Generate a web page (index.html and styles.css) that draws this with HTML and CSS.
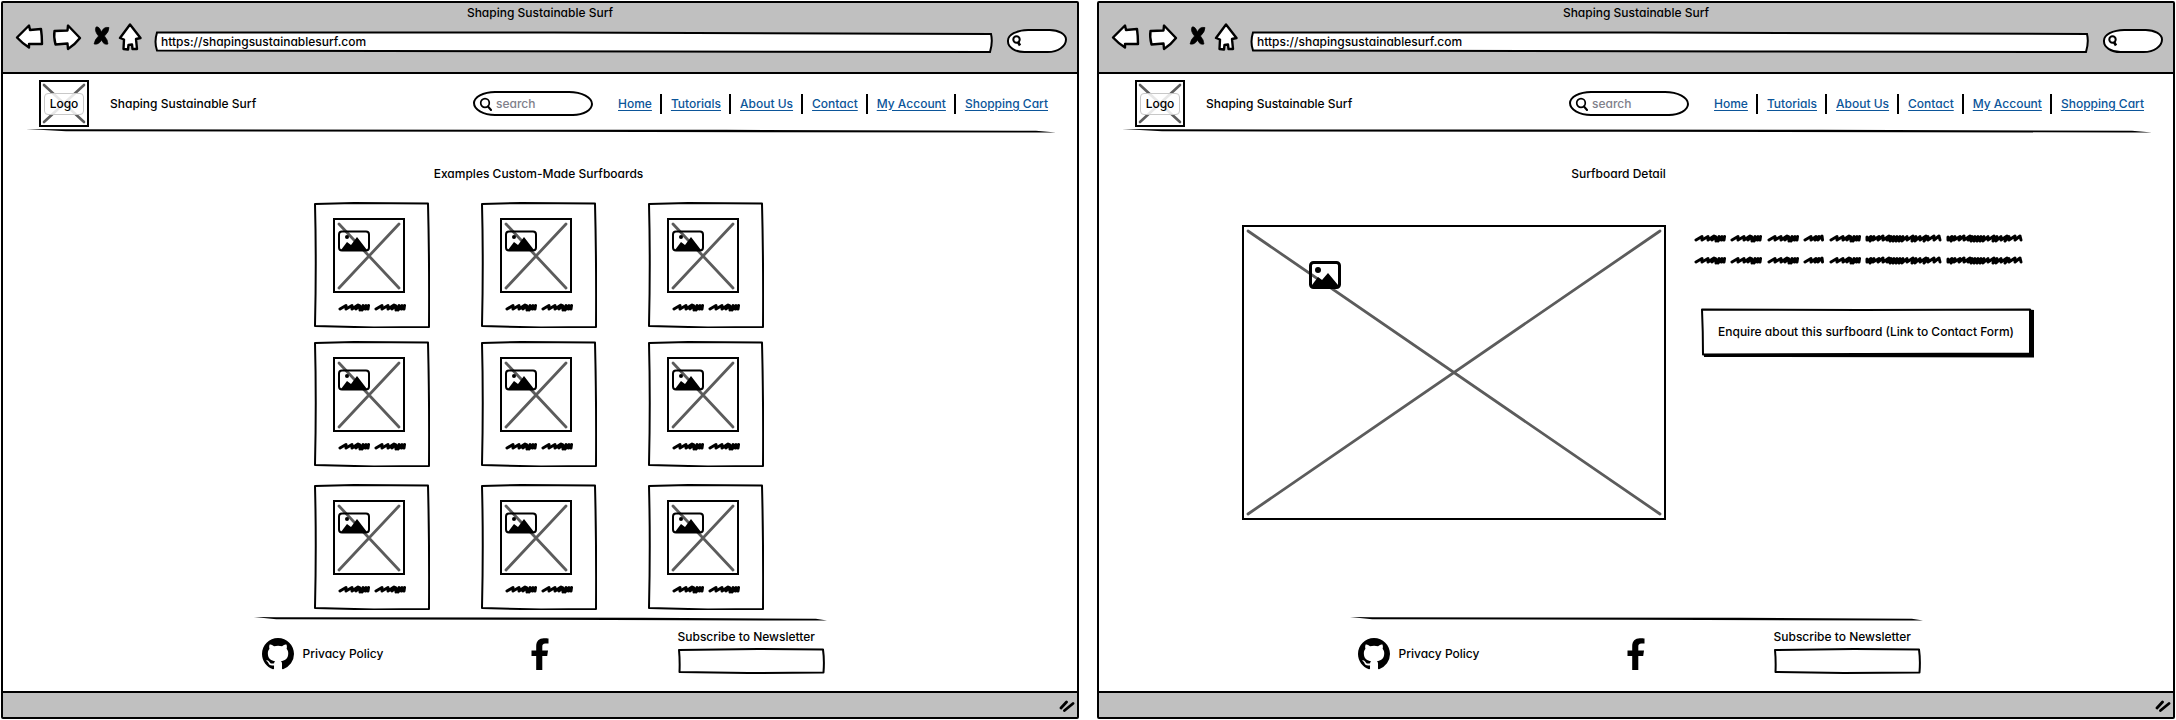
FILE: index.html
```html
<!DOCTYPE html>
<html lang="en">
<head>
<meta charset="utf-8">
<title>Shaping Sustainable Surf</title>
<link rel="stylesheet" href="styles.css">
</head>
<body>
<svg class="defs" aria-hidden="true">
  <symbol id="i-back" viewBox="15 23 33 30"><path d="M17 37.500L29 25.500L30 30L41 29Q42 36 42 44L29 44L29 47.500Q22 43 17 37.500Z" fill="#fff" stroke="#000" stroke-width="2.400" stroke-linejoin="round"/></symbol>
  <symbol id="i-forward" viewBox="48 23 42 30"><path d="M80 38L68 25.500L67.500 30.500L54.500 31Q53.500 37 55.500 44.500L67.500 43.500L68 49Q75 44.500 80 38Z" fill="#fff" stroke="#000" stroke-width="2.400" stroke-linejoin="round"/></symbol>
  <symbol id="i-stop" viewBox="90 23 25 30"><path d="M96 27Q99 26 101.500 32Q103.500 26.500 109 27.500Q109 32 104.500 36Q108 40 108 44Q104 45.500 101.500 40Q99 45 94 44Q95 39 98.500 36Q94 31 96 27Z" stroke="#000" stroke-width="0.600"/></symbol>
  <symbol id="i-home" viewBox="115 23 39 30"><path d="M130 24.500L140.500 38L136 39L137 49L132.500 49L132 44.500L128.500 45L128 49.500L123.500 49L124 39.500L120 38Z" fill="#fff" stroke="#000" stroke-width="2.400" stroke-linejoin="round"/></symbol>
  <symbol id="i-find" viewBox="0 0 12 12"><circle cx="5.500" cy="4.500" r="3.200" fill="none" stroke="#000" stroke-width="2"/><path d="M7 7L9 10.500" stroke="#000" stroke-width="2.600"/></symbol>
  <symbol id="i-search" viewBox="0 0 14 14"><circle cx="6" cy="6" r="4.300" fill="none" stroke="#000" stroke-width="1.700"/><path d="M9 9.500L12 13" stroke="#000" stroke-width="2" stroke-linecap="round"/></symbol>
  <symbol id="i-github" viewBox="0 0 16 16"><path d="M8 0C3.580 0 0 3.580 0 8c0 3.540 2.290 6.530 5.470 7.590.4.070.55-.17.55-.38 0-.19-.01-.82-.01-1.490-2.010.37-2.530-.49-2.690-.94-.09-.23-.48-.94-.82-1.130-.28-.15-.68-.52-.01-.53.63-.01 1.080.58 1.230.82.72 1.210 1.870.87 2.330.66.07-.52.28-.87.51-1.070-1.780-.2-3.640-.89-3.640-3.950 0-.87.31-1.590.82-2.150-.08-.2-.36-1.020.08-2.120 0 0 .67-.21 2.200.82.64-.18 1.320-.27 2-.27s1.360.09 2 .27c1.530-1.040 2.200-.82 2.200-.82.44 1.100.16 1.920.08 2.120.51.56.82 1.270.82 2.150 0 3.070-1.870 3.750-3.650 3.950.29.25.54.73.54 1.480 0 1.070-.01 1.930-.01 2.200 0 .21.15.46.55.38A8.010 8.010 0 0 0 16 8c0-4.420-3.580-8-8-8z"/></symbol>
  <symbol id="i-facebook" viewBox="0 0 18 32"><path d="M5.200 32V18H0.500V12.500H5.200V8.300C5.200 3 8.200 0.300 12.800 0.300C15 0.300 16.900 0.500 17.500 0.600V5.400H14.500C11.900 5.400 11.300 6.700 11.300 8.500V12.500H17L16.200 18H11.300V32Z"/></symbol>
  <symbol id="i-resize" viewBox="0 0 16 13"><path d="M2 9L7.500 3M5.500 11.500L14 4.500" stroke="#000" stroke-width="2.800" stroke-linecap="round"/></symbol>
  <symbol id="bar" viewBox="0 0 839 22" preserveAspectRatio="none"><path d="M3 1.500L400 1.500L837 3Q839 11 836 21L500 20.500L3 19.500Q0 11 3 1.500Z" fill="#fff" stroke="#000" stroke-width="2"/></symbol>
  <symbol id="rule" viewBox="0 0 1030 4" preserveAspectRatio="none"><path d="M0 0L40 0.300L700 0.800L1010 1.800L1030 3.500L1000 3.500L500 2.800L40 2.300Z"/></symbol>
  <symbol id="frame" viewBox="0 0 116 126" preserveAspectRatio="none"><path d="M1 2L40 1L114 1.500Q115.500 60 115 125L60 125.500L1 124Q2.500 60 1 2Z" fill="#fff" stroke="#000" stroke-width="2" stroke-linejoin="round"/></symbol>
  <symbol id="field" viewBox="0 0 147 26" preserveAspectRatio="none"><path d="M1 2L80 1L145 1.500Q146.500 12 145.500 24.500L70 25L1.500 24Q2 12 1 2Z" fill="#fff" stroke="#000" stroke-width="2" stroke-linejoin="round"/></symbol>
  <symbol id="button" viewBox="0 0 334 50" preserveAspectRatio="none"><path d="M3 49L3 46L328 45L328 1.500L333 2L333 49.500Z"/><path d="M1 1.500L160 2L329 1.500L329 45.500L160 46L2 46.500Q2 24 1 1.500Z" fill="#fff" stroke="#000" stroke-width="2" stroke-linejoin="round"/></symbol>
  <symbol id="photo" viewBox="0 0 72 75"><path d="M1 1H71V74H1Z" fill="#fff" stroke="#000" stroke-width="2"/><path d="M6 6L66 70M66 6L6 70" stroke="#5c5c5c" stroke-width="2.800" stroke-linecap="round"/><rect x="6" y="13.500" width="30" height="19" rx="3" fill="none" stroke="#000" stroke-width="2"/><circle cx="14" cy="19" r="2"/><path d="M8 32L14 24L18 27L24 19L34 32Z"/></symbol>
  <symbol id="word" viewBox="0 0 32 10"><path d="M2 7L8 3.500L8 7L14 3.500L14 7L20 3L18 7L21.500 3.500L22 8L25 3.500L24 8L28 3.500L27.500 7L30.500 3.500L30 7" fill="none" stroke="#000" stroke-width="3" stroke-linejoin="round" stroke-linecap="round"/></symbol>
  <symbol id="word-s" viewBox="0 0 21 10"><path d="M2 7L8 3.500L8 7L13 3.500L12 7L16 3.500L15 7L19 3L19.500 7" fill="none" stroke="#000" stroke-width="3" stroke-linejoin="round" stroke-linecap="round"/></symbol>
  <symbol id="word-l" viewBox="0 0 77 10"><path d="M2 4L2 7L6 3.500L5 8L9 3.500L8 7L14 3.500L13 7L18 3L18 7L24 3L22 7L26 3.500L25 8L29 3.500L28 8L32 3.500L31 8L35 3.500L34 8L38 3.500L37 8L42 3.500L42 7L48 3L47 8L51 3.500L50 8L55 3.500L55 7L61 3L59 8L63 3.500L63 7L69 3L69 7L74 3L75 7" fill="none" stroke="#000" stroke-width="3" stroke-linejoin="round" stroke-linecap="round"/></symbol>
  <symbol id="pair" viewBox="0 0 70 10"><use href="#word" width="32" height="10"/><use href="#word" x="36" width="32" height="10"/></symbol>
  <symbol id="line" viewBox="0 0 330 10"><use href="#word" width="32" height="10"/><use href="#word" x="36" width="32" height="10"/><use href="#word" x="73" width="32" height="10"/><use href="#word-s" x="109" width="21" height="10"/><use href="#word" x="135" width="32" height="10"/><use href="#word-l" x="171" width="77" height="10"/><use href="#word-l" x="252" width="77" height="10"/></symbol>
</svg>

<section class="window">
  <div class="toolbar">
    <p class="window-title">Shaping Sustainable Surf</p>
    <div class="controls">
      <button class="tool" aria-label="Back"><svg width="33" height="30"><use href="#i-back"/></svg></button>
      <button class="tool" aria-label="Forward"><svg width="42" height="30"><use href="#i-forward"/></svg></button>
      <button class="tool" aria-label="Stop"><svg width="25" height="30"><use href="#i-stop"/></svg></button>
      <button class="tool" aria-label="Home"><svg width="39" height="30"><use href="#i-home"/></svg></button>
      <div class="sketch address"><svg class="sketch-bg"><use href="#bar"/></svg><input aria-label="Address" value="https://shapingsustainablesurf.com"></div>
      <label class="find"><svg width="12" height="12"><use href="#i-find"/></svg><input aria-label="Find"></label>
    </div>
  </div>
  <div class="page">
    <header class="header">
      <a class="logo" href="#"><svg viewBox="0 0 50 47"><path d="M1 1H49V46H1Z" fill="#fff" stroke="#000" stroke-width="2"/><path d="M5 5L45 42M45 5L5 42" stroke="#5c5c5c" stroke-width="2.600" stroke-linecap="round"/></svg><span>Logo</span></a>
      <p class="brand">Shaping Sustainable Surf</p>
      <label class="search"><svg width="14" height="14"><use href="#i-search"/></svg><input type="search" aria-label="Search" placeholder="search"></label>
      <nav class="nav"><a href="#">Home</a><a href="#">Tutorials</a><a href="#">About Us</a><a href="#">Contact</a><a href="#">My Account</a><a href="#">Shopping Cart</a></nav>
    </header>
    <svg class="rule header-rule"><use href="#rule"/></svg>
    <main class="gallery-page">
      <h1 class="heading">Examples Custom-Made Surfboards</h1>
      <ul class="gallery">
        <li class="sketch card"><svg class="sketch-bg"><use href="#frame"/></svg><svg class="photo"><use href="#photo"/></svg><svg class="caption"><use href="#pair"/></svg></li>
        <li class="sketch card"><svg class="sketch-bg"><use href="#frame"/></svg><svg class="photo"><use href="#photo"/></svg><svg class="caption"><use href="#pair"/></svg></li>
        <li class="sketch card"><svg class="sketch-bg"><use href="#frame"/></svg><svg class="photo"><use href="#photo"/></svg><svg class="caption"><use href="#pair"/></svg></li>
        <li class="sketch card"><svg class="sketch-bg"><use href="#frame"/></svg><svg class="photo"><use href="#photo"/></svg><svg class="caption"><use href="#pair"/></svg></li>
        <li class="sketch card"><svg class="sketch-bg"><use href="#frame"/></svg><svg class="photo"><use href="#photo"/></svg><svg class="caption"><use href="#pair"/></svg></li>
        <li class="sketch card"><svg class="sketch-bg"><use href="#frame"/></svg><svg class="photo"><use href="#photo"/></svg><svg class="caption"><use href="#pair"/></svg></li>
        <li class="sketch card"><svg class="sketch-bg"><use href="#frame"/></svg><svg class="photo"><use href="#photo"/></svg><svg class="caption"><use href="#pair"/></svg></li>
        <li class="sketch card"><svg class="sketch-bg"><use href="#frame"/></svg><svg class="photo"><use href="#photo"/></svg><svg class="caption"><use href="#pair"/></svg></li>
        <li class="sketch card"><svg class="sketch-bg"><use href="#frame"/></svg><svg class="photo"><use href="#photo"/></svg><svg class="caption"><use href="#pair"/></svg></li>
      </ul>
    </main>
    <footer class="footer">
      <svg class="rule"><use href="#rule"/></svg>
      <div class="footer-row">
        <div class="policy"><svg width="32" height="32"><use href="#i-github"/></svg><span>Privacy Policy</span></div>
        <div class="social"><svg width="18" height="32"><use href="#i-facebook"/></svg></div>
        <div class="newsletter"><label for="news-1">Subscribe to Newsletter</label><div class="sketch field"><svg class="sketch-bg"><use href="#field"/></svg><input id="news-1" type="email"></div></div>
      </div>
    </footer>
  </div>
  <div class="statusbar"><svg width="16" height="13"><use href="#i-resize"/></svg></div>
</section>

<section class="window">
  <div class="toolbar">
    <p class="window-title">Shaping Sustainable Surf</p>
    <div class="controls">
      <button class="tool" aria-label="Back"><svg width="33" height="30"><use href="#i-back"/></svg></button>
      <button class="tool" aria-label="Forward"><svg width="42" height="30"><use href="#i-forward"/></svg></button>
      <button class="tool" aria-label="Stop"><svg width="25" height="30"><use href="#i-stop"/></svg></button>
      <button class="tool" aria-label="Home"><svg width="39" height="30"><use href="#i-home"/></svg></button>
      <div class="sketch address"><svg class="sketch-bg"><use href="#bar"/></svg><input aria-label="Address" value="https://shapingsustainablesurf.com"></div>
      <label class="find"><svg width="12" height="12"><use href="#i-find"/></svg><input aria-label="Find"></label>
    </div>
  </div>
  <div class="page">
    <header class="header">
      <a class="logo" href="#"><svg viewBox="0 0 50 47"><path d="M1 1H49V46H1Z" fill="#fff" stroke="#000" stroke-width="2"/><path d="M5 5L45 42M45 5L5 42" stroke="#5c5c5c" stroke-width="2.600" stroke-linecap="round"/></svg><span>Logo</span></a>
      <p class="brand">Shaping Sustainable Surf</p>
      <label class="search"><svg width="14" height="14"><use href="#i-search"/></svg><input type="search" aria-label="Search" placeholder="search"></label>
      <nav class="nav"><a href="#">Home</a><a href="#">Tutorials</a><a href="#">About Us</a><a href="#">Contact</a><a href="#">My Account</a><a href="#">Shopping Cart</a></nav>
    </header>
    <svg class="rule header-rule"><use href="#rule"/></svg>
    <main class="detail-page">
      <h1 class="heading">Surfboard Detail</h1>
      <div class="detail">
        <svg class="hero" viewBox="0 0 424 295"><path d="M1 1H423V294H1Z" fill="#fff" stroke="#000" stroke-width="2"/><path d="M6 6L418 289M418 6L6 289" stroke="#5c5c5c" stroke-width="2.800" stroke-linecap="round"/><rect x="68.500" y="37.500" width="29" height="25" rx="3" fill="none" stroke="#000" stroke-width="3"/><circle cx="76" cy="45" r="3"/><path d="M70 62V60L76 52L80 55L86 48L96 60V62Z"/></svg>
        <div class="info">
          <svg class="text-line"><use href="#line"/></svg>
          <svg class="text-line"><use href="#line"/></svg>
          <button class="sketch enquire"><svg class="sketch-bg"><use href="#button"/></svg><span>Enquire about this surfboard (Link to Contact Form)</span></button>
        </div>
      </div>
    </main>
    <footer class="footer">
      <svg class="rule"><use href="#rule"/></svg>
      <div class="footer-row">
        <div class="policy"><svg width="32" height="32"><use href="#i-github"/></svg><span>Privacy Policy</span></div>
        <div class="social"><svg width="18" height="32"><use href="#i-facebook"/></svg></div>
        <div class="newsletter"><label for="news-2">Subscribe to Newsletter</label><div class="sketch field"><svg class="sketch-bg"><use href="#field"/></svg><input id="news-2" type="email"></div></div>
      </div>
    </footer>
  </div>
  <div class="statusbar"><svg width="16" height="13"><use href="#i-resize"/></svg></div>
</section>
</body>
</html>
```
FILE: styles.css
```css
* { box-sizing: border-box; }

body {
  margin: 0;
  padding: 1px;
  min-height: 100vh;
  display: flex;
  gap: 18px;
  background: #fff;
  color: #000;
  font: 500 12px/16px Inter, Roboto, sans-serif;
  font-feature-settings: "cv11";
}

p, h1, ul { margin: 0; padding: 0; font: inherit; list-style: none; }
svg { display: block; }
input, button {
  border: 0;
  padding: 0;
  margin: 0;
  background: none;
  color: inherit;
  font: inherit;
  font-feature-settings: inherit;
  outline: none;
}
.defs { position: absolute; width: 0; height: 0; }

/* hand-drawn outlines behind a control or card */
.sketch { position: relative; }
.sketch-bg { position: absolute; inset: 0; width: 100%; height: 100%; }
.sketch > :not(.sketch-bg) { position: relative; }

/* browser window */
.window {
  flex: 1;
  min-width: 0;
  display: flex;
  flex-direction: column;
  border: 2px solid #000;
  border-radius: 2px;
}
.toolbar { background: #c0c0c0; border-bottom: 2px solid #000; padding: 0 10px 19px 12px; }
.window-title { padding-right: 2px; text-align: center; line-height: 20px; }
.controls { display: flex; align-items: flex-end; }
.address { flex: 1; height: 22px; padding: 0 7px; }
.address input { width: 100%; height: 20px; }
.find {
  display: flex;
  align-items: center;
  width: 60px;
  height: 24px;
  margin-left: 14px;
  padding: 0 2px;
  background: #fff;
  border: 2px solid #000;
  border-radius: 22px 18px 20px 18px / 12px 11px 14px 12px;
}
.find svg { flex: none; }
.find input { width: 100%; min-width: 0; }

.page { flex: 1; display: flex; flex-direction: column; }
.header { display: flex; align-items: center; padding: 6px 29px 2px 36px; }
.logo { display: grid; place-items: center; color: #000; text-decoration: none; }
.logo > * { grid-area: 1 / 1; }
.logo svg { width: 50px; height: 47px; }
.logo span {
  padding: 2px 5px;
  border: 1px solid #c8c8c8;
  border-radius: 4px;
  background: rgba(255, 255, 255, .85);
}
.brand { margin: 0 auto 0 21px; white-space: nowrap; }
.search {
  display: flex;
  align-items: center;
  gap: 3px;
  width: 120px;
  height: 25px;
  margin-right: 16px;
  padding: 0 4px;
  border: 2px solid #000;
  border-radius: 22px 24px 20px 22px / 12px 13px 12px 13px;
}
.search svg { flex: none; }
.search input { width: 100%; min-width: 0; }
.search input::placeholder { color: #80808a; opacity: 1; }
.nav { display: flex; white-space: nowrap; }
.nav a {
  padding: 2px 8px 2px 9px;
  color: #0b5599;
  text-decoration: underline;
  text-underline-offset: 2px;
}
.nav a + a { border-left: 2px solid #000; }
.nav a:last-child { padding-right: 0; }

.rule { width: 100%; height: 4px; }
.header-rule { width: auto; margin: 0 21px 0 23px; }
.heading { text-align: center; }

.gallery-page { padding: 33px 3px 0 0; }
.gallery {
  display: grid;
  grid-template-columns: repeat(3, 116px);
  grid-template-rows: 139px 143px auto;
  column-gap: 51px;
  align-items: start;
  justify-content: center;
  padding-top: 20px;
}
.card { padding: 16px 19px; height: 126px; }
.photo { width: 72px; height: 75px; }
.caption { width: 70px; height: 10px; margin: 9px 0 0 5px; }

.detail-page { padding-top: 33px; }
.detail-page .heading { padding-right: 35px; }
.detail {
  display: grid;
  grid-template-columns: 424px 340px;
  gap: 28px;
  padding: 43px 0 0 143px;
}
.hero { width: 100%; }
.info { padding-top: 8px; }
.text-line { width: 330px; height: 10px; margin-bottom: 12px; }
.enquire { width: 334px; height: 50px; margin: 31px 0 0 7px; padding: 0 4px 2px 0; }

.footer { width: 573px; margin: auto auto 0; }
.footer-row {
  display: grid;
  grid-template-columns: 277fr 147fr 147fr;
  align-items: center;
  padding: 8px 2px 17px 0;
}
.policy { display: flex; align-items: center; gap: 9px; padding: 4px 0 0 8px; }
.social { padding-top: 4px; }
.newsletter label { display: block; margin-bottom: 3px; white-space: nowrap; }
.field { height: 26px; padding: 3px 6px; }
.field input { width: 100%; height: 20px; }

.statusbar {
  display: flex;
  justify-content: flex-end;
  align-items: center;
  height: 26px;
  padding-right: 2px;
  background: #c0c0c0;
  border-top: 2px solid #000;
}
```
